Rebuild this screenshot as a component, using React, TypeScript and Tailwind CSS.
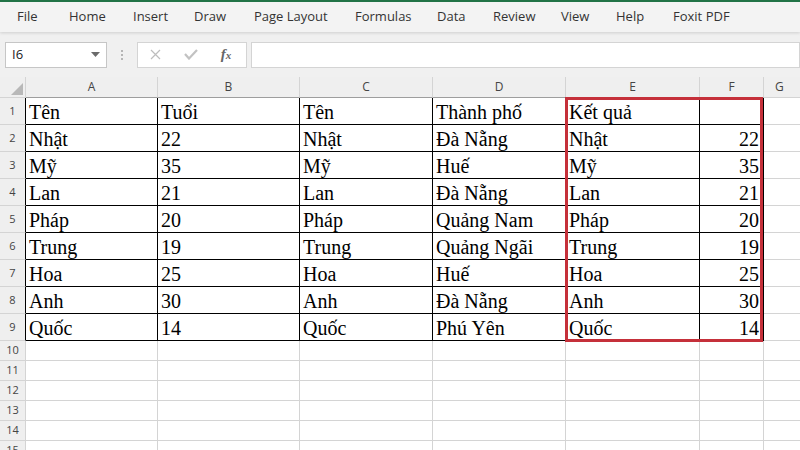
import React from "react";

const tabs: { label: string; w: string }[] = [
  { label: "File", w: "w-[52px]" },
  { label: "Home", w: "w-[64px]" },
  { label: "Insert", w: "w-[61px]" },
  { label: "Draw", w: "w-[60px]" },
  { label: "Page Layout", w: "w-[101px]" },
  { label: "Formulas", w: "w-[82px]" },
  { label: "Data", w: "w-[56px]" },
  { label: "Review", w: "w-[68px]" },
  { label: "View", w: "w-[55px]" },
  { label: "Help", w: "w-[57px]" },
  { label: "Foxit PDF", w: "w-[80px]" },
];

const cols: { key: string; w: string }[] = [
  { key: "A", w: "w-[132px]" },
  { key: "B", w: "w-[142px]" },
  { key: "C", w: "w-[133px]" },
  { key: "D", w: "w-[133px]" },
  { key: "E", w: "w-[134px]" },
  { key: "F", w: "w-[64px]" },
];

type Row = [string, string, string, string, string, string];

const data: Row[] = [
  ["Tên", "Tuổi", "Tên", "Thành phố", "Kết quả", ""],
  ["Nhật", "22", "Nhật", "Đà Nẵng", "Nhật", "22"],
  ["Mỹ", "35", "Mỹ", "Huế", "Mỹ", "35"],
  ["Lan", "21", "Lan", "Đà Nẵng", "Lan", "21"],
  ["Pháp", "20", "Pháp", "Quảng Nam", "Pháp", "20"],
  ["Trung", "19", "Trung", "Quảng Ngãi", "Trung", "19"],
  ["Hoa", "25", "Hoa", "Huế", "Hoa", "25"],
  ["Anh", "30", "Anh", "Đà Nẵng", "Anh", "30"],
  ["Quốc", "14", "Quốc", "Phú Yên", "Quốc", "14"],
];

const uiFont = { fontFamily: '"Open Sans", "Noto Sans", sans-serif' };
const cellFont = { fontFamily: '"Liberation Serif", "Times New Roman", serif' };

function RowHeader({ n, h, dark }: { n: number; h: string; dark?: boolean }) {
  return (
    <div
      className={`w-[26px] ${h} shrink-0 bg-[#efefef] border-r border-b ${
        dark ? "border-r-[#000] border-b-[#d4d4d4]" : "border-[#d4d4d4]"
      } flex items-center justify-center text-[11px] text-[#444]`}
      style={uiFont}
    >
      {n}
    </div>
  );
}

export default function App() {
  return (
    <div className="relative w-[800px] h-[450px] overflow-hidden bg-white">
      {/* ribbon tabs */}
      <div
        className="h-[32px] bg-[#f3f3f3] border-t-2 border-[#217346] flex items-center pl-[17px] text-[13px] text-[#333] shadow-[0_1px_3px_rgba(0,0,0,0.14)] relative z-10"
        style={uiFont}
      >
        {tabs.map((t) => (
          <div key={t.label} className={`${t.w} shrink-0 whitespace-nowrap`}>
            {t.label}
          </div>
        ))}
      </div>

      {/* formula bar */}
      <div className="h-[45px] bg-[#f0f0f0] flex items-center pl-[5px]">
        <div className="w-[102px] h-[26px] border border-[#c6c6c6] bg-white flex items-center justify-between pl-[6px] pr-[6px]">
          <span className="text-[13px] text-[#222]" style={uiFont}>
            I6
          </span>
          <svg width="9" height="5" viewBox="0 0 9 5">
            <path d="M0 0 L9 0 L4.5 5 Z" fill="#6b6b6b" />
          </svg>
        </div>
        <div className="w-[30px] flex flex-col items-center justify-center gap-[2px]">
          <div className="w-[2px] h-[2px] bg-[#b5b5b5]" />
          <div className="w-[2px] h-[2px] bg-[#b5b5b5]" />
          <div className="w-[2px] h-[2px] bg-[#b5b5b5]" />
        </div>
        <div className="w-[110px] h-[26px] border border-[#d4d4d4] bg-white flex items-center">
          <div className="w-[35px] flex justify-center">
            <svg width="11" height="11" viewBox="0 0 11 11">
              <path d="M1 1 L10 10 M10 1 L1 10" stroke="#bdbdbd" strokeWidth="1.2" />
            </svg>
          </div>
          <div className="w-[36px] flex justify-center">
            <svg width="14" height="11" viewBox="0 0 14 11">
              <path d="M1 5 L5 9.5 L13 1" stroke="#c2c2c2" strokeWidth="2.2" fill="none" />
            </svg>
          </div>
          <div
            className="w-[34px] flex justify-center text-[15px] italic font-bold text-[#666]"
            style={cellFont}
          >
            <span>
              f<span className="text-[11px]">x</span>
            </span>
          </div>
        </div>
        <div className="ml-[4px] flex-1 h-[26px] border border-[#d4d4d4] bg-white" />
      </div>

      {/* column headers */}
      <div className="flex h-[21px]">
        <div className="w-[26px] shrink-0 bg-[#efefef] border-r border-b border-[#d4d4d4] relative">
          <svg className="absolute right-[2px] bottom-[2px]" width="12" height="12" viewBox="0 0 12 12">
            <path d="M12 0 L12 12 L0 12 Z" fill="#b8b8b8" />
          </svg>
        </div>
        {cols.map((c) => (
          <div
            key={c.key}
            className={`${c.w} shrink-0 bg-[#efefef] border-r border-b border-r-[#d4d4d4] border-b-[#9e9e9e] flex items-center justify-center text-[12px] text-[#444]`}
            style={uiFont}
          >
            {c.key}
          </div>
        ))}
        <div
          className="flex-1 bg-[#efefef] border-b border-[#d4d4d4] flex items-center pl-[11px] text-[12px] text-[#444]"
          style={uiFont}
        >
          G
        </div>
      </div>

      {/* data rows */}
      {data.map((row, ri) => (
        <div key={ri} className="flex h-[27px]">
          <RowHeader n={ri + 1} h="h-[27px]" dark />
          {row.map((v, ci) => (
            <div
              key={ci}
              className={`${cols[ci].w} shrink-0 h-[27px] border-r border-b border-[#000] flex items-end pb-[2px] text-[20px] leading-[20px] text-[#000] ${
                ci === 5 ? "justify-end pr-[4px]" : "pl-[3px]"
              }`}
              style={cellFont}
            >
              {v}
            </div>
          ))}
          <div className="flex-1 h-[27px] border-b border-[#d4d4d4]" />
        </div>
      ))}

      {/* empty rows */}
      {[10, 11, 12, 13, 14, 15].map((n) => (
        <div key={n} className="flex h-[20px]">
          <RowHeader n={n} h="h-[20px]" />
          {cols.map((c) => (
            <div key={c.key} className={`${c.w} shrink-0 h-[20px] border-r border-b border-[#d4d4d4]`} />
          ))}
          <div className="flex-1 h-[20px] border-b border-[#d4d4d4]" />
        </div>
      ))}

      {/* highlighted result range */}
      <div className="absolute left-[565px] top-[97px] w-[198px] h-[245px] border-[3px] border-[#c5303a] pointer-events-none" />
    </div>
  );
}
